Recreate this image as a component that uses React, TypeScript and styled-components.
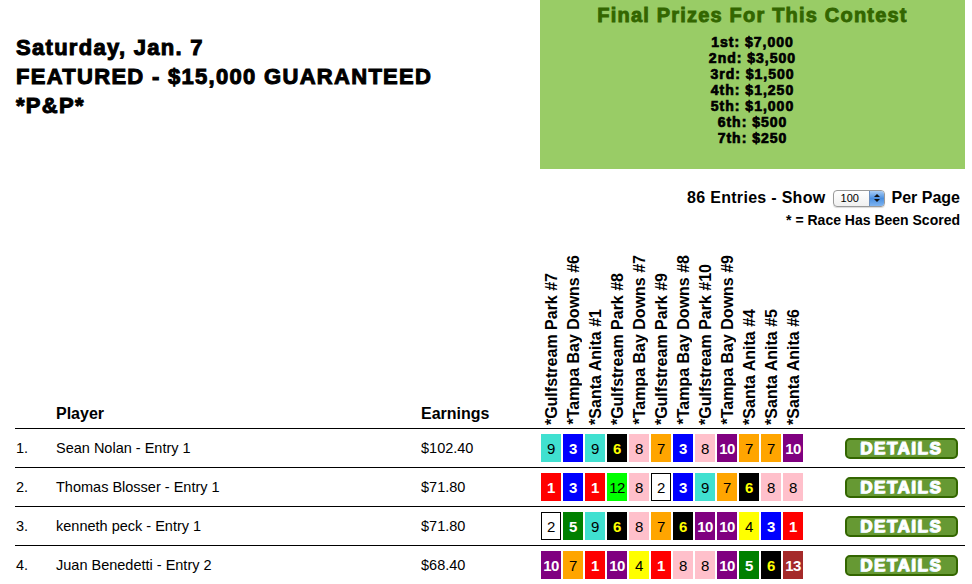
import { createGlobalStyle, styled } from "styled-components"

const GlobalStyle = createGlobalStyle`
    body {
        margin: 0;
        background: #fff;
        font-family: "Liberation Sans", Arial, Helvetica, sans-serif;
        color: #000;
    }
`

const races = [
    '*Gulfstream Park #7',
    '*Tampa Bay Downs #6',
    '*Santa Anita #1',
    '*Gulfstream Park #8',
    '*Tampa Bay Downs #7',
    '*Gulfstream Park #9',
    '*Tampa Bay Downs #8',
    '*Gulfstream Park #10',
    '*Tampa Bay Downs #9',
    '*Santa Anita #4',
    '*Santa Anita #5',
    '*Santa Anita #6',
]

const prizes = ['1st: $7,000', '2nd: $3,500', '3rd: $1,500', '4th: $1,250', '5th: $1,000', '6th: $500', '7th: $250']

const entries = [
    { name: 'Sean Nolan - Entry 1', earnings: '$102.40', picks: [9, 3, 9, 6, 8, 7, 3, 8, 10, 7, 7, 10] },
    { name: 'Thomas Blosser - Entry 1', earnings: '$71.80', picks: [1, 3, 1, 12, 8, 2, 3, 9, 7, 6, 8, 8] },
    { name: 'kenneth peck - Entry 1', earnings: '$71.80', picks: [2, 5, 9, 6, 8, 7, 6, 10, 10, 4, 3, 1] },
    { name: 'Juan Benedetti - Entry 2', earnings: '$68.40', picks: [10, 7, 1, 10, 4, 1, 8, 8, 10, 5, 6, 13] },
]

// saddle cloth colours by program number
const saddle: Record<number, { bg: string; fg: string }> = {
    1: { bg: '#ff0000', fg: '#fff' },
    2: { bg: '#fff', fg: '#000' },
    3: { bg: '#0000ff', fg: '#fff' },
    4: { bg: '#ffff00', fg: '#000' },
    5: { bg: '#008000', fg: '#fff' },
    6: { bg: '#000', fg: '#ffff00' },
    7: { bg: '#ffa500', fg: '#000' },
    8: { bg: '#ffc0cb', fg: '#000' },
    9: { bg: '#40e0d0', fg: '#000' },
    10: { bg: '#800080', fg: '#fff' },
    12: { bg: '#00ff00', fg: '#000' },
    13: { bg: '#a52a2a', fg: '#fff' },
}

const Page = styled.div`
    width: 950px;
    padding-left: 15px;
`

const Top = styled.div`
    display: flex;
    height: 169px;
`

const ContestTitle = styled.h1`
    flex: 1;
    margin: 0;
    padding: 33px 0 0 1px;
    font-size: 22px;
    line-height: 29px;
    font-weight: 700;
    letter-spacing: 1.3px;
    -webkit-text-stroke: 1px #000;

    & > span {
        display: block;
    }
`

const PrizeBox = styled.div`
    width: 425px;
    background: #99cc66;
    text-align: center;
    padding-top: 3px;
    box-sizing: border-box;
`

const PrizeHeading = styled.div`
    font-size: 20px;
    line-height: 24px;
    font-weight: 700;
    letter-spacing: 1.2px;
    color: #336600;
    -webkit-text-stroke: 0.9px #336600;
    margin-bottom: 7px;
`

const PrizeLine = styled.div`
    font-size: 14px;
    line-height: 16px;
    font-weight: 700;
    letter-spacing: 1px;
    -webkit-text-stroke: 0.7px #000;
`

const Controls = styled.div`
    display: flex;
    flex-direction: column;
    align-items: flex-end;
    padding-right: 5px;
    margin-top: 19px;
`

const PagerRow = styled.div`
    display: flex;
    align-items: center;
    height: 20px;
    font-size: 16px;
    font-weight: 700;
    gap: 7px;
`

const PagerText = styled.span<{ $spread?: boolean }>`
    letter-spacing: ${ p => p.$spread ? '0.3px' : '0' };
`

const SelectBox = styled.div`
    display: flex;
    width: 52px;
    height: 17px;
    box-sizing: border-box;
    border: 1px solid #9a9a9a;
    border-radius: 4px;
    background: linear-gradient(#fff, #f0f0f0);
    overflow: hidden;
    box-shadow: 0 1px 1px rgba(0, 0, 0, 0.15);
`

const SelectValue = styled.span`
    flex: 1;
    font-size: 11px;
    font-weight: 400;
    line-height: 15px;
    padding-left: 7px;
`

const SelectArrows = styled.span`
    width: 14px;
    display: flex;
    flex-direction: column;
    align-items: center;
    justify-content: center;
    gap: 2px;
    background: linear-gradient(#a9cdf5, #4a8fe0 50%, #7fb4f0);
    border-left: 1px solid #6b8fbf;
`

const Arrow = styled.span<{ $up?: boolean }>`
    width: 0;
    height: 0;
    border-left: 3px solid transparent;
    border-right: 3px solid transparent;
    ${ p => p.$up ? 'border-bottom: 3px solid #111;' : 'border-top: 3px solid #111;' }
`

const ScoredNote = styled.div`
    font-size: 14px;
    line-height: 18px;
    font-weight: 700;
    margin-top: 3px;
`

const columns = '41px 365px 120px 264px 1fr'

const HeaderRow = styled.div`
    display: grid;
    grid-template-columns: ${ columns };
    align-items: end;
    height: 198px;
    margin-top: 1px;
`

const HeaderLabel = styled.div`
    font-size: 16px;
    line-height: 19px;
    font-weight: 700;
    padding-bottom: 5px;
`

const RaceHeaders = styled.div`
    display: flex;
    align-items: flex-end;
    padding-bottom: 3px;
`

const RaceName = styled.div`
    width: 22px;
    writing-mode: vertical-rl;
    transform: rotate(180deg);
    font-size: 16px;
    line-height: 20px;
    font-weight: 700;
    white-space: nowrap;
    text-align: left;
    display: flex;
    align-items: center;
    padding-left: 1px;
    box-sizing: border-box;
`

const EntryRow = styled.div`
    display: grid;
    grid-template-columns: ${ columns };
    align-items: center;
    height: 39px;
    box-sizing: border-box;
    border-top: 1px solid #000;
    font-size: 14.5px;
`

const Cell = styled.div`
    white-space: nowrap;
`

const RankCell = styled(Cell)`
    padding-left: 1px;
`

const Picks = styled.div`
    display: flex;
    gap: 2px;
`

const PickBox = styled.div<{ $bg: string; $fg: string }>`
    width: 20px;
    height: 28px;
    box-sizing: border-box;
    display: flex;
    align-items: center;
    justify-content: center;
    background: ${ p => p.$bg };
    color: ${ p => p.$fg };
    border: ${ p => p.$bg === '#fff' ? '1px solid #000' : 'none' };
    font-size: 15px;
    font-weight: ${ p => p.$fg === '#000' ? 400 : 700 };
    letter-spacing: -0.5px;
`

const DetailsCell = styled.div`
    display: flex;
    justify-content: flex-end;
    padding-right: 7px;
`

const DetailsButton = styled.button`
    width: 113px;
    height: 21px;
    box-sizing: border-box;
    padding: 0;
    background: #669933;
    border: 2px solid #336600;
    border-radius: 5px;
    color: #fff;
    font-family: "Liberation Sans", Arial, sans-serif;
    font-size: 17px;
    line-height: 17px;
    font-weight: 700;
    letter-spacing: 1.5px;
    -webkit-text-stroke: 0.9px #fff;
    text-shadow: -1px 1px 0 #bfe3f0;
    cursor: pointer;
`

const App = () => {
    return (
        <>
            <GlobalStyle />
            <Page>
                <Top>
                    <ContestTitle>
                        <span>Saturday, Jan. 7</span>
                        <span>FEATURED - $15,000 GUARANTEED</span>
                        <span>*P&amp;P*</span>
                    </ContestTitle>
                    <PrizeBox>
                        <PrizeHeading>Final Prizes For This Contest</PrizeHeading>
                        { prizes.map(p => <PrizeLine key={p}>{p}</PrizeLine>) }
                    </PrizeBox>
                </Top>
                <Controls>
                    <PagerRow>
                        <PagerText $spread>86 Entries - Show</PagerText>
                        <SelectBox>
                            <SelectValue>100</SelectValue>
                            <SelectArrows>
                                <Arrow $up />
                                <Arrow />
                            </SelectArrows>
                        </SelectBox>
                        <PagerText>Per Page</PagerText>
                    </PagerRow>
                    <ScoredNote>* = Race Has Been Scored</ScoredNote>
                </Controls>
                <HeaderRow>
                    <div />
                    <HeaderLabel>Player</HeaderLabel>
                    <HeaderLabel>Earnings</HeaderLabel>
                    <RaceHeaders>
                        { races.map(r => <RaceName key={r}>{r}</RaceName>) }
                    </RaceHeaders>
                    <div />
                </HeaderRow>
                { entries.map((e, i) => (
                    <EntryRow key={e.name}>
                        <RankCell>{i + 1}.</RankCell>
                        <Cell>{e.name}</Cell>
                        <Cell>{e.earnings}</Cell>
                        <Picks>
                            { e.picks.map((n, j) => (
                                <PickBox key={j} $bg={saddle[n].bg} $fg={saddle[n].fg}>{n}</PickBox>
                            )) }
                        </Picks>
                        <DetailsCell>
                            <DetailsButton>DETAILS</DetailsButton>
                        </DetailsCell>
                    </EntryRow>
                )) }
            </Page>
        </>
    )
}

export default App
